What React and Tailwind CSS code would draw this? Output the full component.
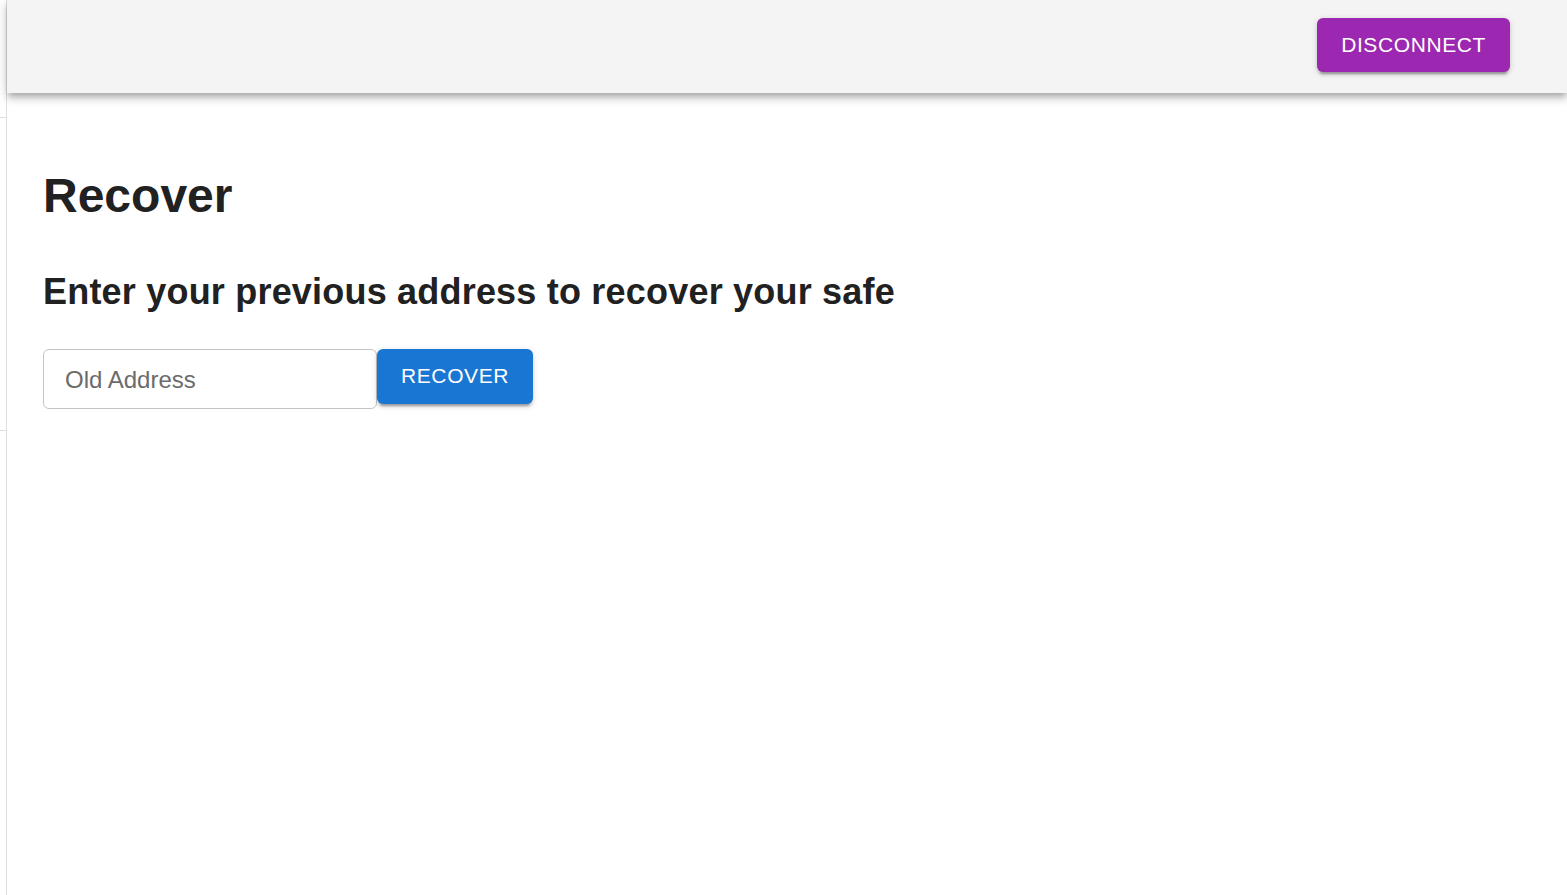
import React, { useState } from 'react';

// --- Layout pieces ---
const SideStrip = () => (
    <div className="w-[7px] shrink-0 border-r border-[#e0e0e0] min-h-screen flex flex-col">
        <div className="h-[117px]"></div>
        <div className="h-[313px] border-t border-[#e0e0e0]"></div>
        <div className="border-t border-[#e0e0e0]"></div>
    </div>
);

const TopBar = ({ onDisconnect }) => (
    <header className="h-[93px] bg-[#f4f4f4] flex justify-end items-start pt-[18px] pr-[57px] shadow-[0_3px_6px_-1.5px_rgba(0,0,0,0.2),0_6px_7.5px_0_rgba(0,0,0,0.14),0_1.5px_15px_0_rgba(0,0,0,0.12)] relative z-10">
        <button
            onClick={onDisconnect}
            className="h-[54px] px-[24px] rounded-[6px] bg-[#9c27b0] text-white text-[21px] leading-[36px] tracking-[0.6px] uppercase shadow-[0_4.5px_1.5px_-3px_rgba(0,0,0,0.2),0_3px_3px_0_rgba(0,0,0,0.14),0_1.5px_7.5px_0_rgba(0,0,0,0.12)]"
        >
            Disconnect
        </button>
    </header>
);

// Main Application Component
export default function App() {
    const [oldAddress, setOldAddress] = useState('');

    const handleRecover = () => {
        console.log('recover', oldAddress);
    };

    return (
        <div className="min-h-screen bg-white flex font-['Liberation_Sans',Arial,sans-serif] text-[#212121]">
            <SideStrip />
            <div className="flex-1 flex flex-col">
                <TopBar onDisconnect={() => setOldAddress('')} />
                <main className="pl-[36px]">
                    <h1 className="mt-[74px] text-[48px] leading-[1.2] font-bold">Recover</h1>
                    <h2 className="mt-[45px] text-[36px] leading-[1.2] font-bold tracking-[0.2px]">
                        Enter your previous address to recover your safe
                    </h2>
                    <div className="mt-[36px] flex items-start">
                        <input
                            type="text"
                            value={oldAddress}
                            onChange={(e) => setOldAddress(e.target.value)}
                            placeholder="Old Address"
                            className="w-[334px] h-[60px] border border-[#c4c4c4] rounded-[6px] px-[21px] pt-[3px] text-[24px] text-[#212121] placeholder:text-[#6b6b6b] outline-none"
                        />
                        <button
                            onClick={handleRecover}
                            className="h-[55px] px-[24px] rounded-[6px] bg-[#1976d2] text-white text-[21px] leading-[36px] tracking-[0.6px] uppercase shadow-[0_4.5px_1.5px_-3px_rgba(0,0,0,0.2),0_3px_3px_0_rgba(0,0,0,0.14),0_1.5px_7.5px_0_rgba(0,0,0,0.12)]"
                        >
                            Recover
                        </button>
                    </div>
                </main>
            </div>
        </div>
    );
}
